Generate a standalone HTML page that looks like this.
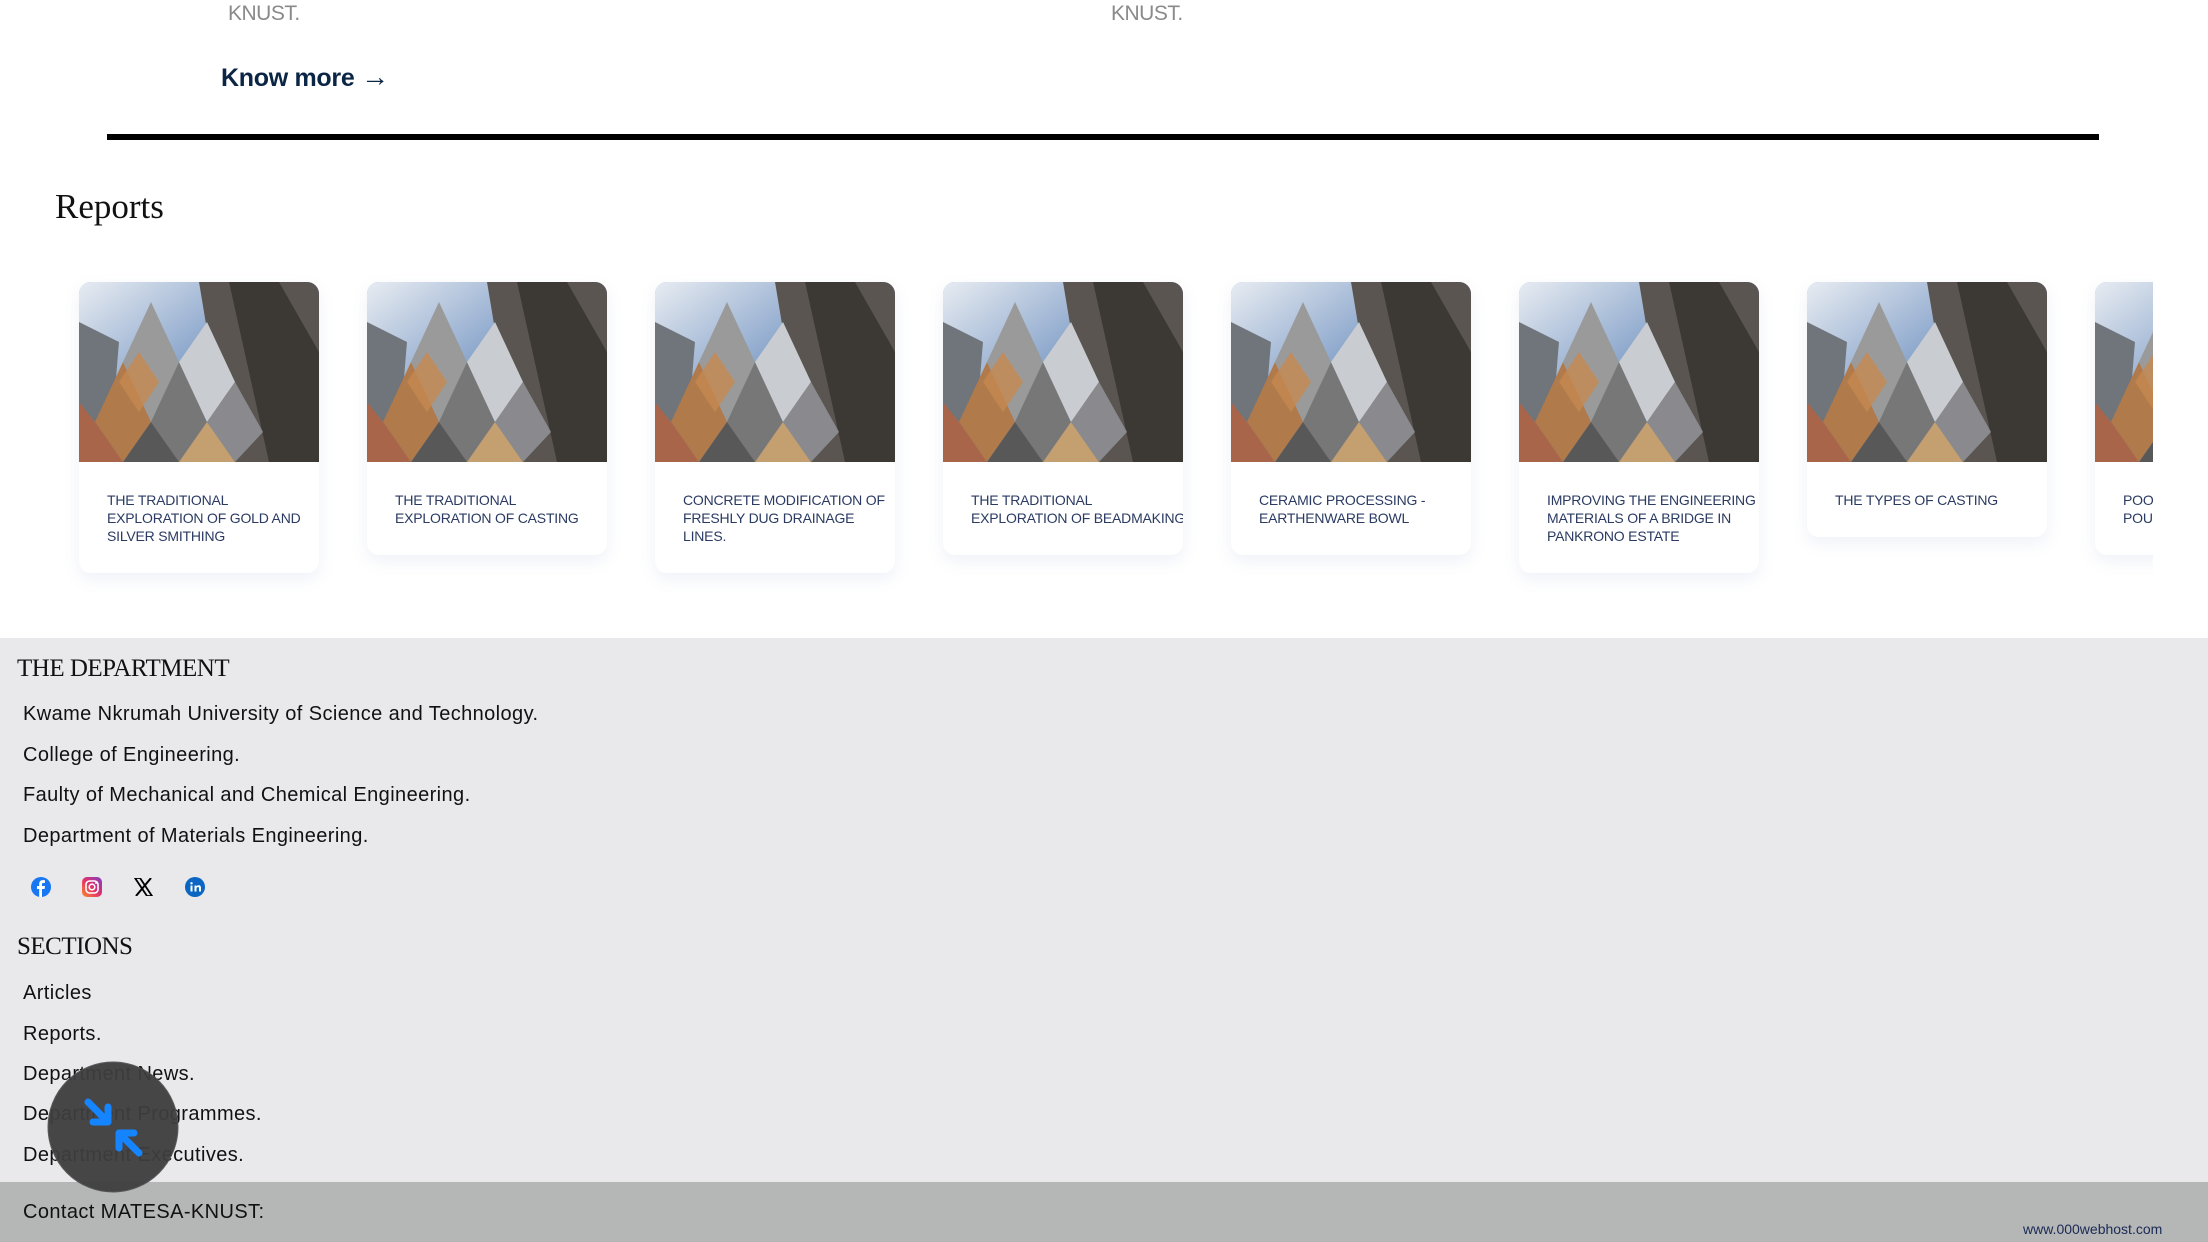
<!DOCTYPE html>
<html><head><meta charset="utf-8"><style>
*{margin:0;padding:0;box-sizing:border-box}
body{width:2208px;height:1242px;overflow:hidden;background:#fff;position:relative;font-family:"Liberation Sans",sans-serif}
.abs{position:absolute;white-space:nowrap}
.knust{color:#8a8a8a;font-size:21px;top:2px;letter-spacing:-0.5px}
.know{left:221px;top:61px;font-size:25px;font-weight:bold;color:#0b2545;letter-spacing:-0.3px}
.know span{font-weight:normal;font-size:28px}
.bar{left:107px;top:134px;width:1992px;height:6px;background:#000}
.rep{left:55px;top:187px;font-family:"Liberation Serif",serif;font-size:35px;color:#111}
.strip{position:absolute;left:0;top:270px;width:2153px;height:340px;overflow:hidden}
.card{position:absolute;top:12px;width:240px;background:#fff;border-radius:12px;box-shadow:0 6px 16px rgba(120,140,200,0.12);overflow:hidden}
.card svg{display:block;width:240px;height:180px}
.card p{padding:29px 0 28px 28px;font-size:14px;line-height:18px;color:#2a3a62;text-transform:uppercase;white-space:nowrap;letter-spacing:-0.2px}
.foot{position:absolute;left:0;top:638px;width:2208px;height:544px;background:#e9e8eb}
.bot{position:absolute;left:0;top:1182px;width:2208px;height:60px;background:#b5b6b6}
.h{font-family:"Liberation Serif",serif;font-size:25px;color:#111;left:17px;letter-spacing:-0.5px}
.l{left:23px;font-size:20px;color:#111;font-family:"Liberation Sans Narrow","Liberation Sans",sans-serif;letter-spacing:0.4px}
</style></head><body>
<svg width="0" height="0" style="position:absolute"><defs>
<g id="img">
<rect width="240" height="180" fill="#8fa9c8"/>
<rect width="240" height="180" fill="url(#sky)"/>
<polygon points="120,0 240,0 240,180 150,180" fill="#5a5550"/>
<polygon points="150,0 200,0 240,70 240,180 190,180" fill="#3c3834"/>
<polygon points="0,40 40,60 30,180 0,180" fill="#70757c"/>
<polygon points="72,20 100,80 72,140 44,80" fill="#9a9a9a"/>
<polygon points="44,80 72,140 44,180 16,140" fill="#b07a4a"/>
<polygon points="16,140 44,180 0,180 0,120" fill="#a8654a"/>
<polygon points="100,80 128,140 100,180 72,140" fill="#777"/>
<polygon points="72,140 100,180 44,180" fill="#585858"/>
<polygon points="128,140 156,180 100,180" fill="#c4a070"/>
<polygon points="128,40 156,100 128,140 100,80" fill="#c9cdd2"/>
<polygon points="156,100 184,150 156,180 128,140" fill="#8a8a8e"/>
<polygon points="60,70 80,100 60,130 40,100" fill="#c58a50" opacity="0.8"/>
</g>
<linearGradient id="sky" x1="0" y1="0" x2="1" y2="1"><stop offset="0" stop-color="#e8ecf2"/><stop offset="0.5" stop-color="#7d9cc6"/><stop offset="1" stop-color="#555"/></linearGradient>
</defs></svg>

<div class="abs knust" style="left:228px">KNUST.</div>
<div class="abs knust" style="left:1111px">KNUST.</div>
<div class="abs know">Know more <span>→</span></div>
<div class="abs bar"></div>
<div class="abs rep">Reports</div>

<div class="strip">
<div class="card" style="left:79px"><svg viewBox="0 0 240 180"><use href="#img"/></svg><p>The traditional<br>exploration of gold and<br>silver smithing</p></div>
<div class="card" style="left:367px"><svg viewBox="0 0 240 180"><use href="#img"/></svg><p>The traditional<br>exploration of casting</p></div>
<div class="card" style="left:655px"><svg viewBox="0 0 240 180"><use href="#img"/></svg><p>Concrete modification of<br>freshly dug drainage<br>lines.</p></div>
<div class="card" style="left:943px"><svg viewBox="0 0 240 180"><use href="#img"/></svg><p>The traditional<br>exploration of beadmaking</p></div>
<div class="card" style="left:1231px"><svg viewBox="0 0 240 180"><use href="#img"/></svg><p>Ceramic processing -<br>earthenware bowl</p></div>
<div class="card" style="left:1519px"><svg viewBox="0 0 240 180"><use href="#img"/></svg><p>Improving the engineering<br>materials of a bridge in<br>Pankrono estate</p></div>
<div class="card" style="left:1807px"><svg viewBox="0 0 240 180"><use href="#img"/></svg><p>The types of casting</p></div>
<div class="card" style="left:2095px"><svg viewBox="0 0 240 180"><use href="#img"/></svg><p>Poor<br>pouring</p></div>
</div>

<div class="foot"></div>
<div class="bot"></div>
<div class="abs h" style="top:655px">THE DEPARTMENT</div>
<div class="abs l" style="top:703px">Kwame Nkrumah University of Science and Technology.</div>
<div class="abs l" style="top:744px">College of Engineering.</div>
<div class="abs l" style="top:784px">Faulty of Mechanical and Chemical Engineering.</div>
<div class="abs l" style="top:825px">Department of Materials Engineering.</div>

<svg class="abs" style="left:31px;top:877px" width="20" height="20" viewBox="0 0 20 20"><circle cx="10" cy="10" r="10" fill="#1877f2"/><path d="M11 20V12h2.6l.4-3H11V7.3c0-.9.3-1.4 1.5-1.4H14V3.2c-.3 0-1.2-.1-2.2-.1-2.2 0-3.6 1.3-3.6 3.7V9H6v3h2.2v8z" fill="#fff"/></svg>
<svg class="abs" style="left:82px;top:877px" width="20" height="20" viewBox="0 0 20 20"><defs><linearGradient id="ig" x1="0" y1="1" x2="1" y2="0"><stop offset="0" stop-color="#fd8a2b"/><stop offset=".5" stop-color="#e1306c"/><stop offset="1" stop-color="#7b3fc4"/></linearGradient></defs><rect width="20" height="20" rx="5" fill="url(#ig)"/><rect x="4" y="4" width="12" height="12" rx="3.5" fill="none" stroke="#fff" stroke-width="1.6"/><circle cx="10" cy="10" r="2.8" fill="none" stroke="#fff" stroke-width="1.6"/><circle cx="14" cy="6" r="1" fill="#fff"/></svg>
<svg class="abs" style="left:134px;top:878px" width="19" height="18" viewBox="0 0 19 18"><path d="M1 0h5l12 18h-5z" fill="none" stroke="#000" stroke-width="1.8"/><path d="M17 0L2 18" stroke="#000" stroke-width="2"/></svg>
<svg class="abs" style="left:185px;top:877px" width="20" height="20" viewBox="0 0 20 20"><circle cx="10" cy="10" r="10" fill="#0a66c2"/><rect x="5.5" y="8.5" width="2" height="6" fill="#fff"/><circle cx="6.5" cy="6.3" r="1.2" fill="#fff"/><path d="M9.5 8.5h2v1c.5-.8 1.3-1.2 2.2-1.2 1.6 0 2.3 1 2.3 2.8v3.4h-2v-3.1c0-.9-.3-1.4-1-1.4-.8 0-1.5.5-1.5 1.6v2.9h-2z" fill="#fff"/></svg>

<div class="abs h" style="top:933px">SECTIONS</div>
<div class="abs l" style="top:982px">Articles</div>
<div class="abs l" style="top:1023px">Reports.</div>
<div class="abs l" style="top:1063px">Department News.</div>
<div class="abs l" style="top:1103px">Department Programmes.</div>
<div class="abs l" style="top:1144px">Department Executives.</div>
<div class="abs l" style="top:1201px">Contact MATESA-KNUST:</div>
<div class="abs" style="left:2023px;top:1221px;font-size:14px;color:#1a2a55">www.000webhost.com</div>

<svg class="abs" style="left:47px;top:1061px" width="132" height="132" viewBox="0 0 132 132"><circle cx="66" cy="66" r="65" fill="#3e3e3e" opacity="0.95" stroke="#555" stroke-width="1"/>
<path d="M41 41L61 61M61 46V61H46" fill="none" stroke="#1485ff" stroke-width="7" stroke-linecap="round" stroke-linejoin="round"/>
<path d="M92 92L72 72M72 87V72H87" fill="none" stroke="#1485ff" stroke-width="7" stroke-linecap="round" stroke-linejoin="round"/></svg>
</body></html>
